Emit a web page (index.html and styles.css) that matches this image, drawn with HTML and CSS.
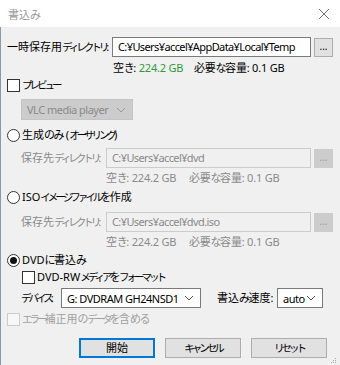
FILE: index.html
```html
<!DOCTYPE html>
<html lang="ja">
<head>
    <meta charset="UTF-8">
    <title>書込み</title>
    <link rel="stylesheet" href="styles.css">
</head>
<body>
<div class="window">
    <div class="titlebar">
        <span class="title">書込<span class="h">み</span></span>
        <svg class="close" width="12" height="12" viewBox="0 0 12 12"><path d="M1 1 L11 11 M11 1 L1 11" stroke="#777" stroke-width="1"/></svg>
    </div>

    <div class="content">
        <div class="row row-temp">
            <span class="label label-temp">一時保存用<span class="k">ディレクトリ</span>:</span>
            <div class="edit edit-temp">C:¥Users¥accel¥AppData¥Local¥Temp</div>
            <div class="browse">...</div>
        </div>
        <div class="info info-temp"><span class="free free-temp">空<span class="h">き</span>: <span class="green">224.2 GB</span></span><span>必要<span class="h">な</span>容量: 0.1 GB</span></div>

        <div class="check check-preview"><span class="box"></span><span class="k">プレビュー</span></div>
        <div class="combo combo-vlc disabled"><span>VLC media player</span><svg class="chev" width="10" height="6" viewBox="0 0 10 6"><path d="M1 1 L5 5 L9 1" fill="none" stroke="#9a9a9a"/></svg></div>

        <div class="radio radio-1"><span class="circle"></span><span>生成<span class="h">のみ</span> (<span class="k">オーサリング</span>)</span></div>
        <div class="row row-dest">
            <span class="label label-dest">保存先<span class="k">ディレクトリ</span>:</span>
            <div class="edit edit-dest disabled">C:¥Users¥accel¥dvd</div>
            <div class="browse disabled">...</div>
        </div>
        <div class="info info-dest gray"><span class="free free-dest">空<span class="h">き</span>: 224.2 GB</span><span>必要<span class="h">な</span>容量: 0.1 GB</span></div>

        <div class="radio radio-2"><span class="circle"></span><span>ISO<span class="k">イメージファイル</span><span class="h">を</span>作成</span></div>
        <div class="row row-dest row-dest2">
            <span class="label label-dest">保存先<span class="k">ディレクトリ</span>:</span>
            <div class="edit edit-dest disabled">C:¥Users¥accel¥dvd.iso</div>
            <div class="browse disabled">...</div>
        </div>
        <div class="info info-dest gray"><span class="free free-dest">空<span class="h">き</span>: 224.2 GB</span><span>必要<span class="h">な</span>容量: 0.1 GB</span></div>

        <div class="radio radio-3"><span class="circle checked"></span><span>DVD<span class="h">に</span>書込<span class="h">み</span></span></div>
        <div class="check check-dvdrw"><span class="box"></span><span>DVD-RW<span class="k">メディア</span><span class="h">を</span><span class="k">フォーマット</span></span></div>
        <div class="row row-device">
            <span class="label label-device"><span class="k">デバイス</span>:</span>
            <div class="combo combo-device"><span>G: DVDRAM GH24NSD1</span><svg class="chev" width="10" height="6" viewBox="0 0 10 6"><path d="M1 1 L5 5 L9 1" fill="none" stroke="#555"/></svg></div>
            <span class="label label-speed">書込<span class="h">み</span>速度:</span>
            <div class="combo combo-speed"><span>auto</span><svg class="chev" width="10" height="6" viewBox="0 0 10 6"><path d="M1 1 L5 5 L9 1" fill="none" stroke="#555"/></svg></div>
        </div>
        <div class="check check-ecc disabled"><span class="box"></span><span><span class="k">エラー</span>補正用<span class="h">の</span><span class="k">データ</span><span class="h">を</span>含<span class="h">める</span></span></div>

        <div class="buttons">
            <div class="button default">開始</div>
            <div class="button"><span class="k">キャンセル</span></div>
            <div class="button"><span class="k">リセット</span></div>
        </div>
        <svg class="grip" width="6" height="6" viewBox="0 0 6 6">
            <rect x="4" y="0" width="1" height="1" fill="#aaa"/>
            <rect x="2" y="2" width="1" height="1" fill="#aaa"/>
            <rect x="4" y="2" width="1" height="1" fill="#aaa"/>
            <rect x="0" y="4" width="1" height="1" fill="#aaa"/>
            <rect x="2" y="4" width="1" height="1" fill="#aaa"/>
            <rect x="4" y="4" width="1" height="1" fill="#aaa"/>
        </svg>
    </div>
</div>
</body>
</html>
```

FILE: styles.css
```css
body {
    margin: 0;
    padding: 0;
    background-color: #f0f0f0;
    font-family: "Noto Sans", "Noto Sans CJK JP", sans-serif;
    font-size: 11px;
    color: #000;
}

/* 仮名を詰める (UIフォントの幅に合わせる) */
.k {
    font-size: 10.5px;
    letter-spacing: -3px;
}

.h {
    letter-spacing: -1.5px;
}

.window {
    width: 340px;
    height: 365px;
    overflow: hidden;
    background-color: #f0f0f0;
}

.titlebar {
    height: 27px;
    background-color: #fff;
    display: flex;
    align-items: center;
    justify-content: space-between;
    padding: 0 10px 0 8px;
}

.title {
    color: #9a9a9a;
}

.content {
    position: relative;
    height: 338px;
    border-left: 1px solid #8a99aa;
    padding-left: 6px;
    padding-top: 10px;
    box-sizing: border-box;
}

.row {
    display: flex;
    align-items: center;
    height: 20px;
}

.row > * {
    flex: none;
}

.label {
    white-space: nowrap;
    line-height: 20px;
}

.label-temp {
    width: 105px;
}

.edit {
    height: 20px;
    box-sizing: border-box;
    border: 1px solid #7a7a7a;
    background-color: #fff;
    padding-left: 5px;
    line-height: 18px;
    letter-spacing: -0.6px;
    white-space: nowrap;
    overflow: hidden;
}

.edit-temp {
    width: 199px;
}

.browse {
    width: 19px;
    height: 19px;
    box-sizing: border-box;
    margin-left: 3px;
    background-color: #e1e1e1;
    border: 1px solid #adadad;
    font-size: 10px;
    line-height: 15px;
    text-align: center;
}

.browse.disabled {
    background-color: #cccccc;
    border-color: #cccccc;
    color: #9a9a9a;
}

.info {
    margin-top: 4px;
    height: 14px;
    line-height: 14px;
    white-space: nowrap;
    letter-spacing: -0.2px;
}

.info-temp {
    padding-left: 106px;
}

.free {
    display: inline-block;
}

.free-temp {
    width: 81px;
}

.free-dest {
    width: 83px;
}

.green {
    color: #2e9a3a;
}

.gray {
    color: #8a8a8a;
}

.check, .radio {
    display: flex;
    align-items: center;
    height: 14px;
    line-height: 14px;
    white-space: nowrap;
}

.box {
    flex: none;
    width: 13px;
    height: 13px;
    box-sizing: border-box;
    border: 1px solid #333;
    background-color: #fff;
    margin-right: 2px;
}

.check.disabled {
    color: #a0a0a0;
}

.check.disabled .box {
    border-color: #cccccc;
    background-color: #f7f7f7;
}

.circle {
    flex: none;
    width: 13px;
    height: 13px;
    box-sizing: border-box;
    border: 1px solid #333;
    border-radius: 50%;
    background-color: #fff;
    margin-right: 2px;
    display: flex;
    align-items: center;
    justify-content: center;
}

.circle.checked::after {
    content: "";
    width: 7px;
    height: 7px;
    border-radius: 50%;
    background-color: #111;
}

.check-preview {
    margin-top: 3px;
}

.combo {
    display: flex;
    align-items: center;
    justify-content: space-between;
    height: 20px;
    box-sizing: border-box;
    border: 1px solid #7a7a7a;
    background-color: #fff;
    padding: 0 6px 0 5px;
    letter-spacing: -0.5px;
    white-space: nowrap;
}

.combo.disabled {
    background-color: #cccccc;
    border-color: #c4c4c4;
    color: #8a8a8a;
}

.combo-vlc {
    width: 112px;
    height: 21px;
    margin-left: 14px;
    margin-top: 7px;
}

.radio-1 {
    margin-top: 8px;
}

.row-dest {
    margin-top: 6px;
    padding-left: 14px;
}

.row-dest2 {
    margin-top: 8px;
}

.label-dest {
    width: 85px;
    color: #8a8a8a;
}

.edit-dest {
    width: 205px;
}

.edit.disabled {
    background-color: #f0f0f0;
    border-color: #cccccc;
    color: #8a8a8a;
}

.info-dest {
    margin-top: 3px;
    padding-left: 99px;
}

.radio-2 {
    margin-top: 5px;
}

.radio-3 {
    margin-top: 4px;
}

.check-dvdrw {
    margin-top: 3px;
    padding-left: 15px;
}

.row-device {
    margin-top: 4px;
    padding-left: 14px;
}

.label-device {
    width: 40px;
}

.combo-device {
    width: 140px;
}

.label-speed {
    margin-left: 16px;
    width: 60px;
}

.combo-speed {
    width: 46px;
}

.check-ecc {
    margin-top: 4px;
}

.buttons {
    display: flex;
    gap: 10px;
    margin-top: 12px;
    padding-left: 72px;
}

.button {
    width: 76px;
    height: 20px;
    box-sizing: border-box;
    background-color: #e1e1e1;
    border: 1px solid #adadad;
    text-align: center;
    line-height: 18px;
}

.button.default {
    border: 2px solid #0078d7;
    line-height: 16px;
}

.grip {
    position: absolute;
    right: 3px;
    bottom: 1px;
}
```
